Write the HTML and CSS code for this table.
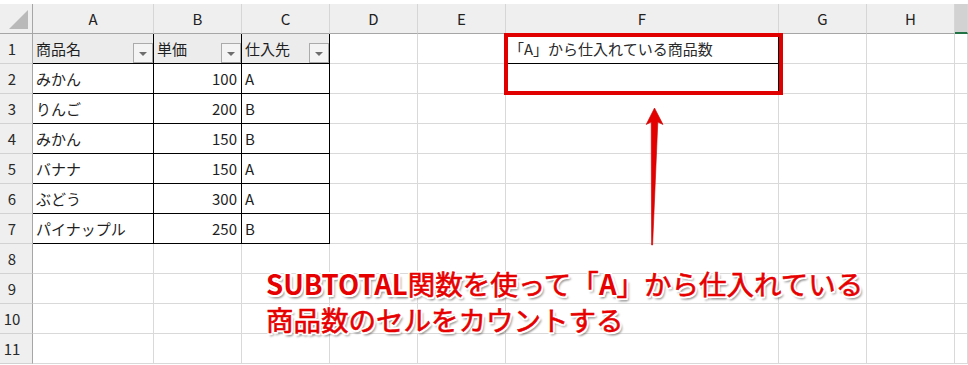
FILE: index.html
```html
<!DOCTYPE html>
<html lang="ja">
<head>
<meta charset="utf-8">
<title>SUBTOTAL</title>
<link rel="stylesheet" href="styles.css">
</head>
<body>
<div class="sheet">
  <div class="grid">
    <div class="corner"><span class="tri"></span></div>
    <div class="ch">A</div><div class="ch">B</div><div class="ch">C</div><div class="ch">D</div><div class="ch">E</div><div class="ch">F</div><div class="ch">G</div><div class="ch">H</div><div class="ch ch-sel"></div>

    <div class="rh">1</div>
    <div class="c t th">商品名<span class="dd"></span></div>
    <div class="c t th">単価<span class="dd"></span></div>
    <div class="c t th">仕入先<span class="dd"></span></div>
    <div class="c"></div><div class="c bk-r"></div>
    <div class="c f">「A」から仕入れている商品数</div>
    <div class="c"></div><div class="c"></div><div class="c"></div>

    <div class="rh">2</div>
    <div class="c t">みかん</div><div class="c t num">100</div><div class="c t">A</div>
    <div class="c"></div><div class="c bk-r"></div>
    <div class="c f"></div>
    <div class="c"></div><div class="c"></div><div class="c"></div>

    <div class="rh">3</div>
    <div class="c t">りんご</div><div class="c t num">200</div><div class="c t">B</div>
    <div class="c"></div><div class="c"></div><div class="c"></div><div class="c"></div><div class="c"></div><div class="c"></div>

    <div class="rh">4</div>
    <div class="c t">みかん</div><div class="c t num">150</div><div class="c t">B</div>
    <div class="c"></div><div class="c"></div><div class="c"></div><div class="c"></div><div class="c"></div><div class="c"></div>

    <div class="rh">5</div>
    <div class="c t">バナナ</div><div class="c t num">150</div><div class="c t">A</div>
    <div class="c"></div><div class="c"></div><div class="c"></div><div class="c"></div><div class="c"></div><div class="c"></div>

    <div class="rh">6</div>
    <div class="c t">ぶどう</div><div class="c t num">300</div><div class="c t">A</div>
    <div class="c"></div><div class="c"></div><div class="c"></div><div class="c"></div><div class="c"></div><div class="c"></div>

    <div class="rh">7</div>
    <div class="c t">パイナップル</div><div class="c t num">250</div><div class="c t">B</div>
    <div class="c"></div><div class="c"></div><div class="c"></div><div class="c"></div><div class="c"></div><div class="c"></div>

    <div class="rh">8</div>
    <div class="c"></div><div class="c"></div><div class="c"></div><div class="c"></div><div class="c"></div><div class="c"></div><div class="c"></div><div class="c"></div><div class="c"></div>

    <div class="rh">9</div>
    <div class="c"></div><div class="c"></div><div class="c"></div><div class="c"></div><div class="c"></div><div class="c"></div><div class="c"></div><div class="c"></div><div class="c"></div>

    <div class="rh">10</div>
    <div class="c"></div><div class="c"></div><div class="c"></div><div class="c"></div><div class="c"></div><div class="c"></div><div class="c"></div><div class="c"></div><div class="c"></div>

    <div class="rh">11</div>
    <div class="c"></div><div class="c"></div><div class="c"></div><div class="c"></div><div class="c"></div><div class="c"></div><div class="c"></div><div class="c"></div><div class="c"></div>
  </div>

  <div class="callout"></div>

  <svg class="arrow" width="30" height="150" viewBox="640 100 30 150" aria-hidden="true">
    <polygon points="654.5,108 663,124.5 657.8,122 652.6,245 651.6,245 651.2,122 646.2,124.5" fill="#e50000" stroke="#c80000" stroke-width="0.6" stroke-linejoin="round"/>
  </svg>

  <div class="note">
    <div class="note-line"><span class="lat">SUBTOTAL</span>関数を使って「<span class="lat">A</span>」から仕入れている</div>
    <div class="note-line">商品数のセルをカウントする</div>
  </div>
</div>
</body>
</html>
```

FILE: styles.css
```css
html, body {
  margin: 0;
  padding: 0;
  background: #ffffff;
}

.sheet {
  position: relative;
  width: 968px;
  height: 365px;
  overflow: hidden;
  font-family: "Noto Sans CJK JP", "Noto Sans", sans-serif;
  font-size: 15px;
  color: #1f1f1f;
}

.grid {
  display: grid;
  grid-template-columns: 33px 121px 88px 88px 88px 88px 273px 88px 88px 1fr;
  grid-auto-rows: 30px;
  padding-top: 4px;
}

.grid > div {
  box-sizing: border-box;
}

.corner {
  background: #efefef;
  border-right: 1px solid #a6a6a6;
  border-bottom: 1px solid #a6a6a6;
  display: flex;
  align-items: flex-end;
  justify-content: flex-end;
  padding: 0 4px 4px 0;
}

.tri {
  width: 0;
  height: 0;
  border-left: 19px solid transparent;
  border-bottom: 19px solid #b9b9b9;
}

.ch {
  background: #efefef;
  border-right: 1px solid #d6d6d6;
  border-bottom: 1px solid #a6a6a6;
  display: flex;
  align-items: center;
  justify-content: center;
  color: #222;
}

.ch-sel {
  background: #d2d2d2;
  border-bottom: 2px solid #217346 !important;
}

.rh {
  background: #efefef;
  border-right: 1px solid #a6a6a6;
  border-bottom: 1px solid #d2d2d2;
  display: flex;
  align-items: center;
  justify-content: center;
  padding-right: 8px;
  color: #2a2a2a;
}

.c {
  border-right: 1px solid #d9d9d9;
  border-bottom: 1px solid #d9d9d9;
  display: flex;
  align-items: center;
  padding: 0 3px;
  white-space: nowrap;
}

.t {
  border-right-color: #000;
  border-bottom-color: #000;
}

.th {
  background: #ececec;
  align-items: stretch;
  padding-right: 0;
  line-height: 29px;
}

.dd {
  margin-left: auto;
  align-self: flex-end;
  width: 20px;
  height: 20px;
  box-sizing: border-box;
  border: 1px solid #ababab;
  background: #f4f4f4;
  display: flex;
  align-items: center;
  justify-content: center;
}

.dd::after {
  content: "";
  width: 0;
  height: 0;
  margin-top: 2px;
  border-left: 4px solid transparent;
  border-right: 4px solid transparent;
  border-top: 4px solid #6e6e6e;
}

.num {
  justify-content: flex-end;
  padding-right: 4px;
}

.bk-r {
  border-right-color: #000;
}

.f {
  border-right-color: #000;
  border-bottom-color: #000;
  color: #2a2a2a;
}

.callout {
  position: absolute;
  left: 504px;
  top: 33px;
  width: 279px;
  height: 62px;
  box-sizing: border-box;
  border: 4.5px solid #e00000;
}

.arrow {
  position: absolute;
  left: 640px;
  top: 100px;
}

.note {
  position: absolute;
  left: 266px;
  top: 266px;
  display: flex;
  flex-direction: column;
  gap: 0;
  font-size: 27.5px;
  font-weight: 400;
  color: #e60000;
  -webkit-text-stroke: 0.6px #e60000;
  white-space: nowrap;
  text-shadow:
    2px 0 0 #fff, -2px 0 0 #fff, 0 2px 0 #fff, 0 -2px 0 #fff,
    1.5px 1.5px 0 #fff, -1.5px -1.5px 0 #fff, 1.5px -1.5px 0 #fff, -1.5px 1.5px 0 #fff,
    3px 3px 2px rgba(0, 0, 0, 0.28), 1px 4px 2px rgba(0, 0, 0, 0.2);
}

.note-line {
  height: 36px;
  line-height: 34px;
  overflow: visible;
}

.lat {
  font-weight: 700;
  -webkit-text-stroke: 0;
}
```
